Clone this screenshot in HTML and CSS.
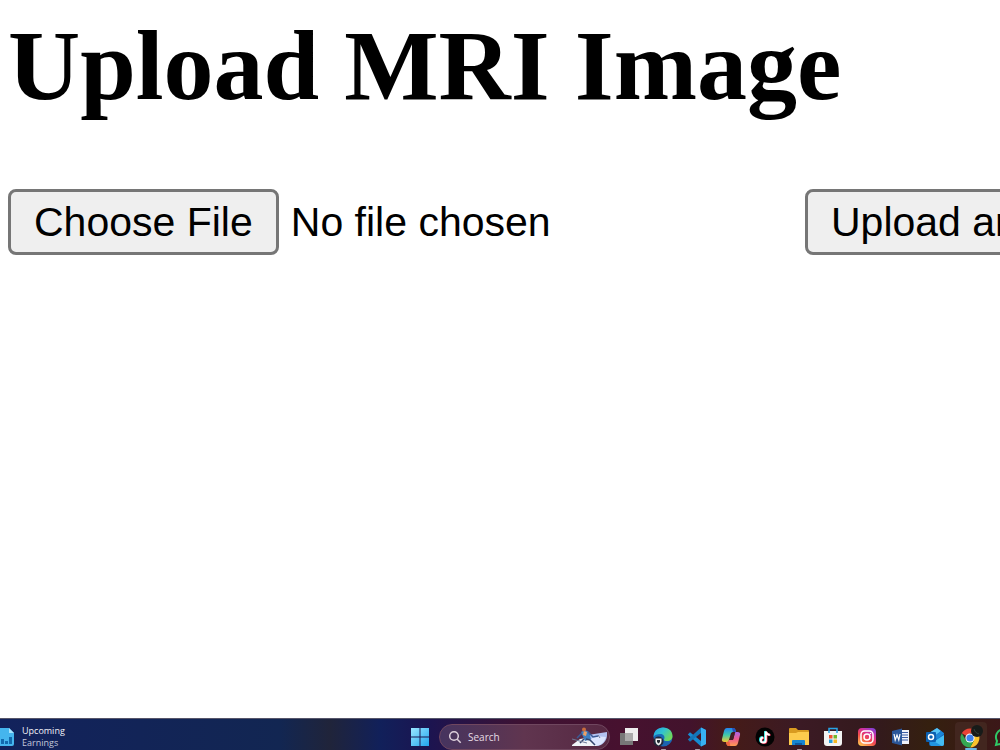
FILE: index.html
```html
<!DOCTYPE html>
<html lang="en">
<head>
    <meta charset="UTF-8">
    <meta name="viewport" content="width=device-width, initial-scale=1.0">
    <title>Upload MRI Image</title>
    <link rel="stylesheet" href="styles.css">
</head>
<body>
    <main class="page">
        <h1>Upload MRI Image</h1>
        <form class="upload-form" method="post" enctype="multipart/form-data">
            <input class="file-input" type="file" name="file" aria-label="MRI image">
            <button class="submit-button" type="submit">Upload and Predict</button>
        </form>
    </main>

    <footer class="taskbar">
        <!-- Widget -->
        <button class="widget" type="button">
            <svg class="widget-icon" width="15" height="18" viewBox="0 0 15 18">
                <path d="M0 0h9l5 5v11a2 2 0 0 1-2 2H0z" fill="#45b5ee"/>
                <path d="M9 0l5 5H9z" fill="#a5e4ff"/>
                <path d="M1 11h3v5H1zM5 13h3v3H5zM9 9h3v7H9z" fill="#126aae"/>
            </svg>
            <span class="widget-text">
                <span>Upcoming</span>
                <span class="widget-sub">Earnings</span>
            </span>
        </button>

        <button class="app" type="button" aria-label="Start">
            <svg width="20" height="20" viewBox="0 0 20 20">
                <defs>
                    <linearGradient id="win" x2="1" y2="1"><stop stop-color="#9be7ff"/><stop offset="1" stop-color="#20a5ef"/></linearGradient>
                </defs>
                <path d="M1 1h8.500v8.500H1zM10.500 1H19v8.500h-8.500zM1 10.500h8.500V19H1zM10.500 10.500H19V19h-8.500z" fill="url(#win)"/>
            </svg>
        </button>

        <button class="search" type="button">
            <svg width="14" height="14" viewBox="0 0 14 14" fill="none" stroke="#ddd0dc" stroke-width="1.500">
                <circle cx="6" cy="6" r="4.300"/>
                <path d="M9.200 9.200l3.500 3.500"/>
            </svg>
            <span>Search</span>
            <svg class="search-art" width="36" height="20" viewBox="0 0 36 20">
                <path d="M16 8l19-3v3a11 11 0 0 1-11 11h-8z" fill="#b3c3f2"/>
                <path d="M22 9l12 1c-2 6-6 9-11 9h-9z" fill="#dce6ff"/>
                <path d="M0 18l8-6 6-1 6 4 5 4H0z" fill="#f0f3f8"/>
                <path d="M9 5l4-2 4 2 2 7-6 2z" fill="#3f7fc0"/>
                <path d="M12 4l3 1-1 4-3-1z" fill="#f0a063"/>
                <path d="M16 5l5 5 5-1M10 6l-5 5" stroke="#3a5a96" stroke-width="1.500" fill="none"/>
                <path d="M14 12l4 1 5 5M12 12l-4 4" stroke="#33456e" stroke-width="1.500" fill="none"/>
                <circle cx="12" cy="2.500" r="2" fill="#c86c3d"/>
                <path d="M0 12l15 4M26 8l2 3" stroke="#6d7896"/>
            </svg>
        </button>

        <nav class="apps">
            <button class="app" type="button" aria-label="Task view">
                <svg width="20" height="20" viewBox="0 0 20 20">
                    <path d="M6 1h13v13H6z" fill="#ededed"/>
                    <path d="M1 6h13v12H1z" fill="#777"/>
                    <path d="M6 6h8v8H6z" fill="#aaa"/>
                </svg>
            </button>
            <button class="app running" type="button" aria-label="Edge">
                <svg width="20" height="20" viewBox="0 0 20 20">
                    <defs>
                        <linearGradient id="edge" x2="1" y2=".6"><stop stop-color="#259ee2"/><stop offset=".5" stop-color="#31c3cf"/><stop offset="1" stop-color="#72d957"/></linearGradient>
                    </defs>
                    <circle cx="10" cy="10" r="9.500" fill="#1769b8"/>
                    <path d="M.5 10C.5 4 5 .5 10 .5c6 0 9.500 4 9.500 8.500 0 3-2 5-5.500 5-2 0-3.500-.500-3-1.500 1.500-3-.500-5.500-3.500-5.500C4 7 1.500 8 .5 10z" fill="url(#edge)"/>
                    <path d="M10 12c1 3 5 4 8 2-1.500 3-4 5-8 5-3-2-3-5 0-7z" fill="#1b63b0"/>
                    <circle cx="5.500" cy="14.500" r="5" fill="#21283a"/>
                    <path d="M2.500 11.500h6v3c0 2-1.500 3-3 4-1.500-1-3-2-3-4z" fill="#eee"/>
                    <path d="M4 13h3v2l-1.500 1.500L4 15z" fill="#252b35"/>
                </svg>
            </button>
            <button class="app running" type="button" aria-label="Visual Studio Code">
                <svg width="20" height="20" viewBox="0 0 20 20">
                    <path d="M14 .5l5 2.500v14l-5 2.500L.8 7.500 3 5.200l11 8.800z" fill="#168bd2"/>
                    <path d="M14 .5V6L3 14.800.8 12.500z" fill="#1475b8"/>
                    <path d="M14 .5L19 3v14l-5 2.500z" fill="#38b1f3"/>
                </svg>
            </button>
            <button class="app" type="button" aria-label="Copilot">
                <svg width="20" height="20" viewBox="0 0 20 20">
                    <defs>
                        <linearGradient id="copilot-left" x2="0" y2="1"><stop stop-color="#2384ee"/><stop offset=".5" stop-color="#3fc9ab"/><stop offset="1" stop-color="#f4c831"/></linearGradient>
                        <linearGradient id="copilot-right" x2="0" y2="1"><stop stop-color="#a765e8"/><stop offset=".5" stop-color="#ee5b8e"/><stop offset="1" stop-color="#ff9d50"/></linearGradient>
                    </defs>
                    <path d="M6 1h6c2 0 2.500 1.500 3 4h-3c-1.500 0-2 1-2.300 2L8 13c-.400 1.500-1 2-2.500 2H3.500c-2 0-3-1-2.500-3L3 4c.500-2 1.500-3 3-3z" fill="url(#copilot-left)"/>
                    <path d="M14.500 5h2c2 0 3 1 2.500 3l-2 8c-.500 2-1.500 3-3 3H8c-2 0-2.500-1.500-3-4h.500C7 15 7.600 14.500 8 13h3c.800 0 1.200-.500 1.500-1.500L14 6z" fill="url(#copilot-right)"/>
                    <path d="M10.500 7h3l-1.500 6H8.500z" fill="#402025"/>
                    <path d="M11 1h1c2 0 2.500 1.500 3 4h-3z" fill="#2450bd"/>
                    <path d="M5 15h3.500l.800 4H8c-2 0-2.500-1.500-3-4z" fill="#f0663c"/>
                </svg>
            </button>
            <button class="app" type="button" aria-label="TikTok">
                <svg width="20" height="20" viewBox="0 0 20 20" fill="none" stroke-width="2">
                    <circle cx="10" cy="10" r="9.500" fill="#030303"/>
                    <path d="M10 4v8.500a2.500 2.500 0 1 1-2.500-2.500M10 4c.500 2 2 3.500 4 3.500" stroke="#25e5df"/>
                    <path d="M11.500 5v8.500A2.500 2.500 0 1 1 9 11M11.500 5c.500 2 2 3 4 3" stroke="#ef3155"/>
                    <path d="M10.800 4.500V13a2.500 2.500 0 1 1-2.500-2.500M10.800 4.500c.500 2 2 3.300 4 3.300" stroke="#fff"/>
                </svg>
            </button>
            <button class="app running" type="button" aria-label="File Explorer">
                <svg width="20" height="20" viewBox="0 0 20 20">
                    <path d="M0 2a1 1 0 0 1 1-1h6l2 2h10a1 1 0 0 1 1 1v12H0z" fill="#d99b20"/>
                    <path d="M0 6h7l2-1h11v13H0z" fill="#fdcb4d"/>
                    <path d="M3 18v-4a1 1 0 0 1 1-1h11a1 1 0 0 1 1 1v4z" fill="#1685d2"/>
                    <path d="M6 16h7v2H6z" fill="#0c5ba2"/>
                </svg>
            </button>
            <button class="app" type="button" aria-label="Microsoft Store">
                <svg width="20" height="20" viewBox="0 0 20 20">
                    <path d="M6 6V1.500h8V6" fill="none" stroke="#28a5e7" stroke-width="1.500"/>
                    <path d="M1 4h18v12a3 3 0 0 1-3 3H4a3 3 0 0 1-3-3z" fill="#f3f3f3"/>
                    <path d="M6 4v2M14 4v2" stroke="#28a5e7" stroke-width="1.500"/>
                    <path d="M6 8h3.500v3.500H6z" fill="#ef5130"/>
                    <path d="M10.500 8H14v3.500h-3.500z" fill="#72b72b"/>
                    <path d="M6 12.500h3.500V16H6z" fill="#239ddd"/>
                    <path d="M10.500 12.500H14V16h-3.500z" fill="#f6b924"/>
                </svg>
            </button>
            <button class="app" type="button" aria-label="Instagram">
                <svg width="20" height="20" viewBox="0 0 20 20">
                    <defs>
                        <linearGradient id="insta" x1=".2" y1="1" x2=".8" y2="0"><stop stop-color="#ffc252"/><stop offset=".4" stop-color="#f34c4b"/><stop offset=".7" stop-color="#d42e9a"/><stop offset="1" stop-color="#8541d6"/></linearGradient>
                    </defs>
                    <rect x="1" y="1" width="18" height="18" rx="4" fill="url(#insta)"/>
                    <g fill="none" stroke="#fff" stroke-width="1.500">
                        <rect x="4" y="4" width="12" height="12" rx="3.500"/>
                        <circle cx="10" cy="10" r="3"/>
                    </g>
                    <circle cx="13.500" cy="6.500" r=".8" fill="#fff"/>
                </svg>
            </button>
            <button class="app" type="button" aria-label="Word">
                <svg width="20" height="20" viewBox="0 0 20 20">
                    <path d="M9 3h9v14H9z" fill="#f0f3fa"/>
                    <path d="M11 5.500h6M11 8h6M11 10.500h6M11 13h6" stroke="#3b5ca5"/>
                    <path d="M1 4l10-2.500v17L1 16z" fill="#2b579a"/>
                    <path d="M3 7l1.200 6L6 8l1.800 5L9 7" fill="none" stroke="#fff" stroke-width="1.200"/>
                </svg>
            </button>
            <button class="app" type="button" aria-label="Outlook">
                <svg width="20" height="20" viewBox="0 0 20 20">
                    <path d="M4 6l8-5 7 5v11a2 2 0 0 1-2 2H6a2 2 0 0 1-2-2z" fill="#1466b8"/>
                    <path d="M4 6l8-5 4 3-9 7z" fill="#56c4f5"/>
                    <path d="M10 9l6-5 3 2.500-7 6z" fill="#1b87d8"/>
                    <path d="M5 17l14-9v9a2 2 0 0 1-2 2H7z" fill="#44bdf2"/>
                    <path d="M5 12l12 7H7a2 2 0 0 1-2-2z" fill="#2196e0"/>
                    <rect x="1" y="5" width="10" height="10" rx="1" fill="#0c61b1"/>
                    <circle cx="6" cy="10" r="2.500" fill="none" stroke="#fff" stroke-width="1.500"/>
                </svg>
            </button>
            <button class="app active" type="button" aria-label="Chrome">
                <svg width="24" height="24" viewBox="0 0 24 24">
                    <path d="M11 13L2.800 8.200A9.500 9.500 0 0 1 19.200 8.300H11z" fill="#ea4335"/>
                    <path d="M11 13l8.200-4.700A9.500 9.500 0 0 1 11 22.500l4-7z" fill="#fbc32d"/>
                    <path d="M11 13l4 2.500-4 7A9.500 9.500 0 0 1 2.800 8.200L7 15.500z" fill="#34a853"/>
                    <circle cx="11" cy="13" r="4.600" fill="#fff"/>
                    <circle cx="11" cy="13" r="3.600" fill="#3f83ee"/>
                    <circle cx="18" cy="6" r="6" fill="#171b19"/>
                    <path d="M15 4c1 3 2 4 5 5" fill="none" stroke="#354039"/>
                </svg>
            </button>
            <button class="app" type="button" aria-label="WhatsApp">
                <svg width="20" height="20" viewBox="0 0 20 20">
                    <path d="M2 18l1-4a8 8 0 1 1 3 3z" fill="none" stroke="#2fc866" stroke-width="2"/>
                </svg>
            </button>
        </nav>
    </footer>
</body>
</html>
```
FILE: styles.css
```css
body {
    margin: 0;
    min-height: 100vh;
    display: flex;
    flex-direction: column;
    background-color: #fff;
    overflow-x: hidden;
}

.page {
    flex: 1;
    padding: 8px;
    overflow: hidden;
}

h1 {
    margin: 0 0 65px;
    font-family: "Liberation Serif", "Times New Roman", serif;
    font-size: 100px;
    line-height: 116px;
    font-weight: bold;
    color: #000;
    white-space: nowrap;
}

.upload-form {
    display: flex;
    gap: 8px;
}

.file-input,
.submit-button,
.file-input::file-selector-button {
    font-family: "Liberation Sans", Arial, sans-serif;
    font-size: 41px;
    line-height: 48px;
    color: #000;
}

.file-input {
    flex: none;
    width: 789px;
}

.submit-button,
.file-input::file-selector-button {
    padding: 6px 23px;
    border: 3px solid #767676;
    border-radius: 8px;
    background-color: #efefef;
}

.file-input::file-selector-button {
    margin: 0 12px 0 0;
}

.submit-button {
    flex: none;
    white-space: nowrap;
}

/* Taskbar */
.taskbar {
    display: flex;
    align-items: center;
    height: 31px;
    overflow: hidden;
    border-top: 1px solid #55556a;
    background: linear-gradient(90deg, #12225c 0%, #122652 28%, #20243a 33%, #11205a 38%, #1c1450 43%, #3d1233 52%, #47112f 62%, #42132c 69%, #451b18 73%, #3b1a24 80%, #331a1c 88%, #35200f 93%, #3b1718 100%);
    font-family: "Open Sans", "Noto Sans", sans-serif;
}

.taskbar button {
    padding: 0;
    border: 0;
    background: none;
    font-family: inherit;
    color: #f2f2f7;
}

.taskbar .widget {
    flex: 0 0 403px;
    display: flex;
    align-items: center;
    gap: 7px;
    padding-top: 4px;
    font-weight: 500;
    text-align: left;
}

.widget-text {
    display: flex;
    flex-direction: column;
    font-size: 9px;
    line-height: 12px;
}

.widget-sub {
    color: #c3c8dc;
}

.taskbar .app {
    position: relative;
    flex: 0 0 34px;
    display: flex;
    align-items: center;
    justify-content: center;
    height: 31px;
    padding-top: 5px;
}

.taskbar .search {
    flex: 0 0 171px;
    box-sizing: border-box;
    display: flex;
    align-items: center;
    gap: 6px;
    height: 26px;
    margin: 4px 2px 0;
    padding: 0 1px 0 8px;
    border: 1px solid #70475f;
    border-radius: 13px;
    background: linear-gradient(90deg, #46345f, #60354f 50%, #562842);
    font-size: 10px;
    font-weight: 500;
    color: #e6dce5;
}

.search-art {
    margin-left: auto;
}

.apps {
    display: flex;
}

.taskbar .active {
    flex-basis: 32px;
    height: 28px;
    margin: 3px 0 0 3px;
    padding-top: 2px;
    border-radius: 4px 4px 0 0;
    background-color: #42261f;
}

/* Indicator under open apps */
.running::after,
.active::after {
    content: "";
    position: absolute;
    bottom: 0;
    width: 5px;
    height: 1px;
    border-radius: 1px;
    background-color: #a89aa2;
}

.active::after {
    width: 12px;
    height: 2px;
    background-color: #69b8e8;
}
```
